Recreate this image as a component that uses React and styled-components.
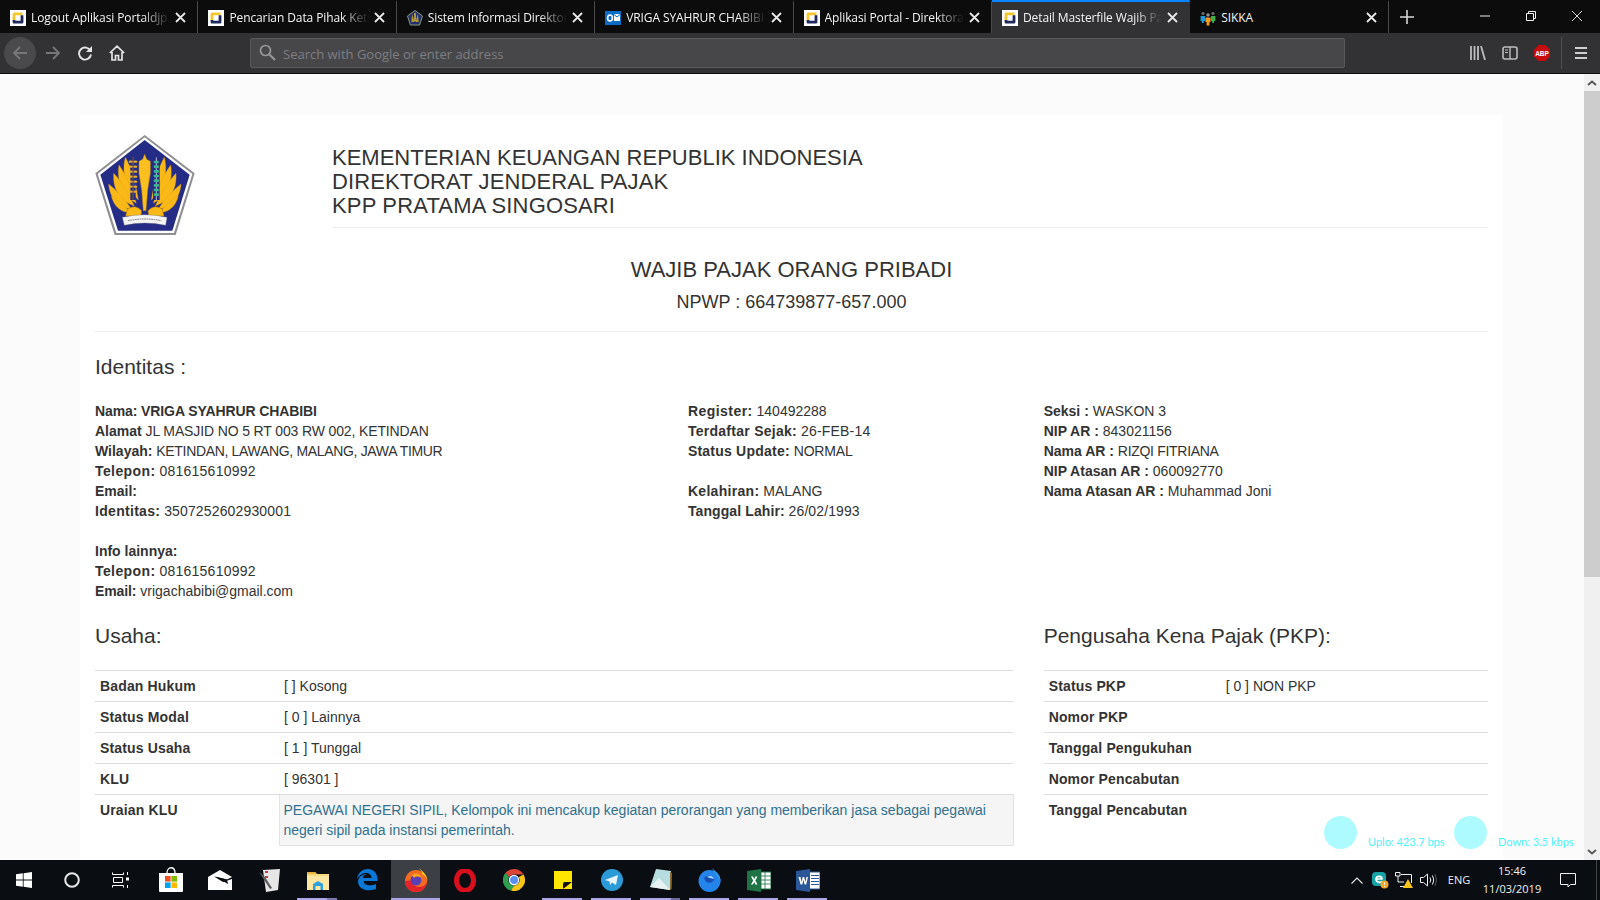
import React from "react";
import styled, { createGlobalStyle } from "styled-components";

const GlobalStyle = createGlobalStyle`
  html, body {
    margin: 0;
    padding: 0;
    height: 100%;
    overflow: hidden;
  }
  * { box-sizing: border-box; }
`;

const TABS = [
  { title: "Logout Aplikasi Portaldjp | Direktorat", icon: "portal" },
  { title: "Pencarian Data Pihak Ketiga", icon: "portal" },
  { title: "Sistem Informasi Direktorat", icon: "seal" },
  { title: "VRIGA SYAHRUR CHABIBI - Outlook", icon: "outlook" },
  { title: "Aplikasi Portal - Direktorat Jenderal", icon: "portal" },
  { title: "Detail Masterfile Wajib Pajak", icon: "portal", active: true },
  { title: "SIKKA", icon: "people", short: true },
];

function PortalIcon() {
  return (
    <svg width="16" height="16" viewBox="0 0 16 16">
      <rect width="16" height="16" fill="#fff" />
      <path d="M4 2.5 H12.5 V5.2 H5.4 V10 H2.6 V4 Q2.6 2.5 4 2.5 Z" fill="#f4c62b" />
      <path d="M2.6 10 H5.4 V10.8 H10.6 V5.2 H13.4 V12 Q13.4 13.6 12 13.6 H4 Q2.6 13.6 2.6 12 Z" fill="#1f2a5c" />
    </svg>
  );
}

function SealIcon() {
  return (
    <svg width="16" height="16" viewBox="0 0 16 16">
      <path d="M8 0.5 L15.5 6 L12.6 15 H3.4 L0.5 6 Z" fill="#24306e" stroke="#8d9a7a" />
      <path d="M5 4 L7.6 12 H4.4 Z M11 4 L8.4 12 H11.6 Z" fill="#b89a2a" />
      <rect x="7.2" y="3" width="1.6" height="8" fill="#c9b04a" />
    </svg>
  );
}

function OutlookIcon() {
  return (
    <svg width="16" height="16" viewBox="0 0 16 16">
      <rect x="0" y="1" width="16" height="14" fill="#0a6cc4" />
      <rect x="9" y="4" width="6" height="7" fill="#fff" />
      <path d="M9 4.5 L12 7 L15 4.5" fill="none" stroke="#0a6cc4" />
      <ellipse cx="5" cy="8" rx="2.4" ry="3" fill="none" stroke="#fff" strokeWidth="1.6" />
    </svg>
  );
}

function PeopleIcon() {
  return (
    <svg width="16" height="16" viewBox="0 0 16 16">
      <circle cx="3" cy="3.5" r="1.6" fill="#6b6b6b" />
      <circle cx="13" cy="3.5" r="1.6" fill="#6b6b6b" />
      <circle cx="8" cy="5" r="1.8" fill="#8d8d8d" />
      <path d="M0.6 6 H5 V11 H3.8 V13 H2 V11 H0.6 Z" fill="#1e9bd7" />
      <path d="M11 6 H15.4 V11 H14 V13 H12.2 V11 H11 Z" fill="#39b24a" />
      <path d="M5.4 7.4 H10.6 V12 H9.4 V15.6 H6.6 V12 H5.4 Z" fill="#f39a1f" />
    </svg>
  );
}

const TAB_ICONS = {
  portal: PortalIcon,
  seal: SealIcon,
  outlook: OutlookIcon,
  people: PeopleIcon,
};

const FEATHERS = [
  "M137 112 C156 145 168 190 176 240 C150 215 122 170 137 112 Z",
  "M118 135 C140 165 156 205 170 250 C138 232 108 190 118 135 Z",
  "M102 160 C126 185 146 220 164 258 C128 246 98 215 102 160 Z",
  "M87 192 C112 212 136 238 156 268 C120 262 90 238 87 192 Z",
  "M95 228 C116 240 136 256 152 278 C124 278 102 258 95 228 Z",
];

function Logo() {
  return (
    <svg width="100" height="100" viewBox="47 45 298 300">
      <path d="M195 45 L345 160 L288 345 H105 L47 160 Z" fill="#8f8f93" />
      <path d="M195 52 L338 162 L283 339 H110 L54 162 Z" fill="#fff" />
      <path d="M195 60 L330 164 L278 332 H115 L62 164 Z" fill="#252c86" />
      {FEATHERS.map((d) => (
        <path key={d} d={d} fill="#fbb917" stroke="#d9a015" strokeWidth="1" />
      ))}
      <g transform="matrix(-1 0 0 1 391 0)">
        {FEATHERS.map((d) => (
          <path key={d} d={d} fill="#fbb917" stroke="#d9a015" strokeWidth="1" />
        ))}
      </g>
      <path d="M143 268 Q165 250 186 272 L184 288 H138 Z" fill="#fbb917" stroke="#9a6c0a" strokeWidth="1.5" />
      <path d="M248 268 Q226 250 205 272 L207 288 H253 Z" fill="#fbb917" stroke="#9a6c0a" strokeWidth="1.5" />
      <path d="M160 112 V240" stroke="#252c86" strokeWidth="16" />
      <path d="M230 112 V240" stroke="#252c86" strokeWidth="20" />
      <path d="M195 103 L201 118 L212 124 V160 L204 210 L199 272 H191 L186 210 L178 160 V124 L189 118 Z" fill="#fbc01f" stroke="#b5830f" strokeWidth="1.5" />
      <path d="M160 112 V240" stroke="#9a6a1e" strokeWidth="2.5" />
      {[125, 140, 155, 170, 185, 200, 215].map((y) => (
        <g key={y} fill="#e9ac2e">
          <ellipse cx="153" cy={y} rx="6" ry="3.5" />
          <ellipse cx="167" cy={y} rx="6" ry="3.5" />
        </g>
      ))}
      <path d="M230 112 V240" stroke="#fff" strokeWidth="2" />
      {[122, 136, 150, 164, 178, 192, 206, 220].map((y) => (
        <rect key={y} x={222} y={y} width="16" height="8" rx="3" fill="#3bb58f" />
      ))}
      <path d="M128 292 Q195 276 262 292 L258 316 Q195 302 134 316 Z" fill="#f4f4f4" stroke="#6f6f6f" strokeWidth="1" />
      <path d="M145 302 Q195 292 245 302" stroke="#777" strokeWidth="3" strokeDasharray="5 2" fill="none" />
    </svg>
  );
}

function TaskIcon({ name }) {
  switch (name) {
    case "store":
      return (
        <svg width="24" height="26" viewBox="0 0 24 26">
          <path d="M8 6 C8 -1 16 -1 16 6" fill="none" stroke="#fff" strokeWidth="1.3" />
          <path d="M0 6 H24 V24 Q24 25 23 25 H1 Q0 25 0 24 Z" fill="#fff" />
          <rect x="6" y="9" width="5.6" height="5.6" fill="#f25022" />
          <rect x="12.4" y="9" width="5.6" height="5.6" fill="#7fba00" />
          <rect x="6" y="15.4" width="5.6" height="5.6" fill="#00a4ef" />
          <rect x="12.4" y="15.4" width="5.6" height="5.6" fill="#ffb900" />
        </svg>
      );
    case "mail":
      return (
        <svg width="24" height="20" viewBox="0 0 24 20">
          <path d="M0 7 L12 0 L24 7 L19 9.5 L6 6.5 L15 12 L24 9 V20 H0 Z" fill="#fff" />
          <path d="M7 6.5 L19 9.5 L20 14 Z" fill="#0a0d12" />
        </svg>
      );
    case "notes":
      return (
        <svg width="24" height="24" viewBox="0 0 24 24">
          <path d="M6 2 L23 1 L21 22 L9 24 Z" fill="#e6e6e6" />
          <path d="M2 4 L13 21 L15 20 L8 9 Z" fill="#5c5c5c" />
          <path d="M8 3 h3 v2 h-3 z M8 8 h3 v2 h-3z" fill="#c24040" />
        </svg>
      );
    case "folder":
      return (
        <svg width="22" height="19" viewBox="0 0 22 19">
          <path d="M0 1 H8 L10 3 H22 V19 H0 Z" fill="#f5d97e" />
          <path d="M0 1 H8 L10 3 H0 Z" fill="#e6b33f" />
          <path d="M0 5 H22 V19 H0 Z" fill="#fbe7a1" />
          <path d="M6 19 V13 L11 10 L16 13 V19 H13.5 V15 H8.5 V19 Z" fill="#2f9ee0" />
        </svg>
      );
    case "edge":
      return (
        <svg width="22" height="22" viewBox="0 0 22 22">
          <path d="M1 10 C2 3 7 0 12 0 C18 0 22 5 21.5 12 H7.5 C8 16 13 18 20 15 V20 C12 23 2 21 2 12 C3 7 7 5 11 5 C8 6 6.5 7.5 7 9 H15.5 C15.5 5 12 3.5 9 4 C5.5 4.5 3 7 1 10 Z" fill="#0a78d7" />
        </svg>
      );
    case "firefox":
      return (
        <svg width="24" height="24" viewBox="0 0 24 24">
          <circle cx="12" cy="13" r="11" fill="#f26b21" />
          <path d="M15 0 C18 3 24 7 23.4 14 C23 9 20 7 18 6 C19 4 16 2 15 0 Z" fill="#ffcb2e" />
          <path d="M1 13 C1 22 9 24 12 24 C18 24 23 19 23 14 C21 19 15 20 11 18 C8 16 8 13 10 12 Z" fill="#e5242a" />
          <circle cx="12" cy="12" r="5.5" fill="#5b3fb5" />
          <path d="M8 7 C12 4 17 6 18 11 C16 8 12 8 10 10 Z" fill="#ffa21c" />
        </svg>
      );
    case "opera":
      return (
        <svg width="22" height="23" viewBox="0 0 22 23">
          <ellipse cx="11" cy="11.5" rx="8.5" ry="10" fill="none" stroke="#d8101e" strokeWidth="5" />
        </svg>
      );
    case "chrome":
      return (
        <svg width="22" height="22" viewBox="0 0 22 22">
          <path d="M11 0 A11 11 0 0 1 20.5 5.5 H11 A5.5 5.5 0 0 0 6 8.3 L2.5 3.8 A11 11 0 0 1 11 0 Z" fill="#db4437" />
          <path d="M2.5 3.8 L6 8.3 A5.5 5.5 0 0 0 11 16.5 L8 21.6 A11 11 0 0 1 2.5 3.8 Z" fill="#2f9e4f" />
          <path d="M20.5 5.5 A11 11 0 0 1 8 21.6 L11 16.5 A5.5 5.5 0 0 0 15.7 8 Z" fill="#f5c518" />
          <circle cx="11" cy="11" r="4.6" fill="#5a8df0" stroke="#fff" strokeWidth="1.2" />
        </svg>
      );
    case "sticky":
      return (
        <svg width="18" height="18" viewBox="0 0 18 18">
          <rect width="18" height="18" fill="#ffe600" />
          <path d="M9 18 V13 Q9 11 11 11 H18 Z" fill="#111" />
        </svg>
      );
    case "telegram":
      return (
        <svg width="22" height="22" viewBox="0 0 22 22">
          <circle cx="11" cy="11" r="11" fill="#2a9bd8" />
          <path d="M4 11 L17 6 L15 16 L11 13.5 L9 16 L8.6 12.6 Z" fill="#e8f4fb" />
        </svg>
      );
    case "notepad":
      return (
        <svg width="24" height="24" viewBox="0 0 24 24">
          <path d="M7 1 L22 3 L21 22 L1 19 Z" fill="#b8dde0" />
          <path d="M1 19 L10 10 L21 22 Z" fill="#e8f2f2" />
          <path d="M21 4 L23 5 L22.6 21 L21 22 Z" fill="#8a6a32" />
        </svg>
      );
    case "fxdev":
      return (
        <svg width="23" height="24" viewBox="0 0 23 24">
          <circle cx="11.5" cy="13" r="11" fill="#2385ea" />
          <path d="M14 0 C17 3 23 7 22.6 14 C21 8 17 6 14 0 Z" fill="#2aa3ee" />
          <path d="M6 10 C9 7 14 7 16.5 11 C15 15 10 16 7.5 13 Z" fill="#1a4fb5" />
          <path d="M9 9 C12 7 15 8 16 11 C13 10 11 10 9 9 Z" fill="#a5dcf9" />
        </svg>
      );
    case "excel":
      return (
        <svg width="24" height="23" viewBox="0 0 24 23">
          <rect x="11" y="3" width="13" height="17" fill="#fff" stroke="#1f7244" />
          <path d="M14 3 V20 M18 3 V20 M11 7 H24 M11 11 H24 M11 15 H24" stroke="#1f7244" strokeWidth="0.8" />
          <path d="M0 2 L14 0 V23 L0 21 Z" fill="#1f7244" />
          <path d="M4 7.5 L6 7.5 L7.2 10 L8.5 7.5 H10.5 L8.3 11.5 L10.5 15.5 H8.4 L7.2 13 L5.9 15.5 H4 L6.2 11.5 Z" fill="#fff" />
        </svg>
      );
    case "word":
      return (
        <svg width="24" height="23" viewBox="0 0 24 23">
          <rect x="11" y="3" width="13" height="17" fill="#fff" stroke="#2b579a" />
          <path d="M15 6.5 H23 M15 9.5 H23 M15 12.5 H23 M15 15.5 H23" stroke="#2b579a" strokeWidth="1.2" />
          <path d="M0 2 L14 0 V23 L0 21 Z" fill="#2b579a" />
          <path d="M2.5 8 L4.5 8 L5.5 13 L6.7 8 H8.2 L9.4 13 L10.4 8 H12 L10.2 15.5 H8.6 L7.4 10.8 L6.3 15.5 H4.6 Z" fill="#fff" />
        </svg>
      );
    default:
      return null;
  }
}

const TASK_ITEMS = [
  { name: "store" },
  { name: "mail" },
  { name: "notes" },
  { name: "folder", open: true, stacked: "light" },
  { name: "edge" },
  { name: "firefox", active: true },
  { name: "opera" },
  { name: "chrome" },
  { name: "sticky", open: true },
  { name: "telegram", open: true },
  { name: "notepad", open: true, stacked: "dark" },
  { name: "fxdev", open: true },
  { name: "excel", open: true },
  { name: "word", open: true },
];

export default function App() {
  return (
    <Screen>
      <GlobalStyle />
      <TabBar>
        {TABS.map((tab) => {
          const Icon = TAB_ICONS[tab.icon];
          return (
            <Tab key={tab.title} $active={tab.active}>
              <TabIcon>
                <Icon />
              </TabIcon>
              <TabTitle $short={tab.short}>{tab.title}</TabTitle>
              <svg width="11" height="11" viewBox="0 0 11 11">
                <path d="M1 1 L10 10 M10 1 L1 10" stroke="#e8e8e8" strokeWidth="1.8" />
              </svg>
            </Tab>
          );
        })}
        <NewTab>
          <svg width="14" height="14" viewBox="0 0 14 14">
            <path d="M7 0 V14 M0 7 H14" stroke="#d8d8d8" strokeWidth="1.6" />
          </svg>
        </NewTab>
        <WindowButtons>
          <WindowButton>
            <svg width="10" height="10" viewBox="0 0 10 10">
              <path d="M0 5 H10" stroke="#eee" />
            </svg>
          </WindowButton>
          <WindowButton>
            <svg width="10" height="10" viewBox="0 0 10 10">
              <path d="M0.5 2.5 H7.5 V9.5 H0.5 Z M2.5 2.5 V0.5 H9.5 V7.5 H7.5" fill="none" stroke="#eee" />
            </svg>
          </WindowButton>
          <WindowButton>
            <svg width="10" height="10" viewBox="0 0 10 10">
              <path d="M0 0 L10 10 M10 0 L0 10" stroke="#eee" strokeWidth="0.9" />
            </svg>
          </WindowButton>
        </WindowButtons>
      </TabBar>

      <Toolbar>
        <BackButton>
          <svg width="16" height="16" viewBox="0 0 16 16">
            <path d="M15 8 H2 M8 2 L2 8 L8 14" fill="none" stroke="#77777a" strokeWidth="1.8" />
          </svg>
        </BackButton>
        <NavButton>
          <svg width="16" height="16" viewBox="0 0 16 16">
            <path d="M1 8 H14 M8 2 L14 8 L8 14" fill="none" stroke="#77777a" strokeWidth="1.8" />
          </svg>
        </NavButton>
        <NavButton>
          <svg width="16" height="16" viewBox="0 0 16 16">
            <path d="M13.5 6 A6 6 0 1 0 14 9.5" fill="none" stroke="#e4e4e4" strokeWidth="1.9" />
            <path d="M15 1 V7 H9 Z" fill="#e4e4e4" />
          </svg>
        </NavButton>
        <NavButton>
          <svg width="16" height="16" viewBox="0 0 16 16">
            <path d="M0.8 8 L8 1.2 L15.2 8 M3 7 V15 H6.5 V10.5 H9.5 V15 H13 V7" fill="none" stroke="#e4e4e4" strokeWidth="1.7" />
          </svg>
        </NavButton>
        <UrlBar>
          <svg width="17" height="17" viewBox="0 0 17 17">
            <circle cx="6.5" cy="6.5" r="5" fill="none" stroke="#98989a" strokeWidth="1.7" />
            <path d="M10.2 10.2 L16 16" stroke="#98989a" strokeWidth="2" />
          </svg>
          <UrlHint>Search with Google or enter address</UrlHint>
        </UrlBar>
        <ToolIcons>
          <svg width="16" height="14" viewBox="0 0 16 14">
            <path d="M1 0 V14 M4.5 0 V14 M8 0 V14 M11 0 L15 14" stroke="#bdbdbf" strokeWidth="1.8" />
          </svg>
          <svg width="16" height="14" viewBox="0 0 16 14">
            <rect x="1" y="1" width="14" height="12" rx="2" fill="none" stroke="#bdbdbf" strokeWidth="1.6" />
            <path d="M8 1 V13" stroke="#bdbdbf" strokeWidth="1.4" />
            <path d="M3 4 H6 M3 6.5 H6" stroke="#bdbdbf" />
          </svg>
          <svg width="16" height="16" viewBox="0 0 16 16">
            <path d="M4.7 0 H11.3 L16 4.7 V11.3 L11.3 16 H4.7 L0 11.3 V4.7 Z" fill="#c70d0c" />
            <AbpLabel x="8" y="10.6">ABP</AbpLabel>
          </svg>
        </ToolIcons>
        <ToolDivider />
        <svg width="12" height="12" viewBox="0 0 12 12">
          <path d="M0 1 H12 M0 6 H12 M0 11 H12" stroke="#cfcfcf" strokeWidth="1.8" />
        </svg>
      </Toolbar>

      <Viewport>
        <Page>
          <Card>
            <HeaderRow>
              <LogoCol>
                <Logo />
              </LogoCol>
              <HeaderText>
                <OrgLine>KEMENTERIAN KEUANGAN REPUBLIK INDONESIA</OrgLine>
                <OrgLine $ls={0.1}>DIREKTORAT JENDERAL PAJAK</OrgLine>
                <OrgLine $ls={0.15}>KPP PRATAMA SINGOSARI</OrgLine>
                <Rule />
              </HeaderText>
            </HeaderRow>

            <DocTitle>WAJIB PAJAK ORANG PRIBADI</DocTitle>
            <DocNumber>NPWP : 664739877-657.000</DocNumber>
            <TitleRule />

            <SectionTitle>Identitas :</SectionTitle>
            <InfoGrid>
              <InfoCol $span={5}>
                <div><Key $ls={-0.1}>Nama: VRIGA SYAHRUR CHABIBI</Key></div>
                <div><Key>Alamat</Key> <Val $ls={-0.13}>JL MASJID NO 5 RT 003 RW 002, KETINDAN</Val></div>
                <div><Key>Wilayah:</Key> <Val $ls={-0.33}>KETINDAN, LAWANG, MALANG, JAWA TIMUR</Val></div>
                <div><Key $ls={0.4}>Telepon:</Key> <Val $ls={0.25}>081615610992</Val></div>
                <div><Key>Email:</Key></div>
                <div><Key $ls={0.3}>Identitas:</Key> <Val $ls={0.15}>3507252602930001</Val></div>
                <Gap />
                <div><Key>Info lainnya:</Key></div>
                <div><Key $ls={0.4}>Telepon:</Key> <Val $ls={0.25}>081615610992</Val></div>
                <div><Key $ls={-0.1}>Email:</Key> vrigachabibi@gmail.com</div>
              </InfoCol>
              <InfoCol $span={3}>
                <div><Key $ls={0.45}>Register:</Key> 140492288</div>
                <div><Key $ls={0.27}>Terdaftar Sejak:</Key> <Val $ls={0.2}>26-FEB-14</Val></div>
                <div><Key $ls={0.22}>Status Update:</Key> <Val $ls={-0.15}>NORMAL</Val></div>
                <Gap />
                <div><Key $ls={0.3}>Kelahiran:</Key> MALANG</div>
                <div><Key $ls={0.1}>Tanggal Lahir:</Key> <Val $ls={0.1}>26/02/1993</Val></div>
              </InfoCol>
              <InfoCol $span={4}>
                <div><Key>Seksi :</Key> WASKON 3</div>
                <div><Key>NIP AR :</Key> 843021156</div>
                <div><Key>Nama AR :</Key> <Val $ls={-0.3}>RIZQI FITRIANA</Val></div>
                <div><Key>NIP Atasan AR :</Key> 060092770</div>
                <div><Key>Nama Atasan AR :</Key> Muhammad Joni</div>
              </InfoCol>
            </InfoGrid>

            <InfoGrid>
              <InfoCol $span={8}>
                <TableTitle>Usaha:</TableTitle>
                <DataTable>
                  <tbody>
                    <tr>
                      <LabelCell $width={184}>Badan Hukum</LabelCell>
                      <ValueCell>[ ] Kosong</ValueCell>
                    </tr>
                    <tr>
                      <LabelCell>Status Modal</LabelCell>
                      <ValueCell>[ 0 ] Lainnya</ValueCell>
                    </tr>
                    <tr>
                      <LabelCell>Status Usaha</LabelCell>
                      <ValueCell>[ 1 ] Tunggal</ValueCell>
                    </tr>
                    <tr>
                      <LabelCell>KLU</LabelCell>
                      <ValueCell>[ 96301 ]</ValueCell>
                    </tr>
                    <tr>
                      <LabelCell>Uraian KLU</LabelCell>
                      <WellCell>
                        PEGAWAI NEGERI SIPIL, Kelompok ini mencakup kegiatan perorangan yang memberikan jasa sebagai pegawai negeri sipil pada instansi pemerintah.
                      </WellCell>
                    </tr>
                  </tbody>
                </DataTable>
              </InfoCol>
              <InfoCol $span={4}>
                <TableTitle>Pengusaha Kena Pajak (PKP):</TableTitle>
                <DataTable>
                  <tbody>
                    <tr>
                      <LabelCell $width={177}>Status PKP</LabelCell>
                      <ValueCell>[ 0 ] NON PKP</ValueCell>
                    </tr>
                    <tr>
                      <LabelCell>Nomor PKP</LabelCell>
                      <ValueCell />
                    </tr>
                    <tr>
                      <LabelCell>Tanggal Pengukuhan</LabelCell>
                      <ValueCell />
                    </tr>
                    <tr>
                      <LabelCell>Nomor Pencabutan</LabelCell>
                      <ValueCell />
                    </tr>
                    <tr>
                      <LabelCell>Tanggal Pencabutan</LabelCell>
                      <ValueCell />
                    </tr>
                  </tbody>
                </DataTable>
              </InfoCol>
            </InfoGrid>
          </Card>
          <SpeedWidget>
            <SpeedDot />
            <SpeedText>Uplo: 423.7 bps</SpeedText>
            <SpeedDot />
            <SpeedText>Down: 3.5 kbps</SpeedText>
          </SpeedWidget>
        </Page>
        <ScrollBar>
          <ScrollArrow>
            <svg width="10" height="6" viewBox="0 0 10 6">
              <path d="M1 5 L5 1.5 L9 5" fill="none" stroke="#555" strokeWidth="1.8" />
            </svg>
          </ScrollArrow>
          <ScrollThumb />
          <ScrollTrack />
          <ScrollArrow>
            <svg width="10" height="6" viewBox="0 0 10 6">
              <path d="M1 1 L5 4.5 L9 1" fill="none" stroke="#555" strokeWidth="1.8" />
            </svg>
          </ScrollArrow>
        </ScrollBar>
      </Viewport>

      <Taskbar>
        <SystemSlot>
          <svg width="16" height="16" viewBox="0 0 16 16">
            <path d="M0 2.3 L6.8 1.3 V7.5 H0 Z M7.6 1.2 L16 0 V7.5 H7.6 Z M0 8.4 H6.8 V14.7 L0 13.7 Z M7.6 8.4 H16 V16 L7.6 14.8 Z" fill="#fff" />
          </svg>
        </SystemSlot>
        <SystemSlot>
          <svg width="16" height="16" viewBox="0 0 16 16">
            <circle cx="8" cy="8" r="6.8" fill="none" stroke="#e8e8e8" strokeWidth="2" />
          </svg>
        </SystemSlot>
        <SystemSlot>
          <svg width="17" height="16" viewBox="0 0 17 16">
            <path d="M0.5 0.5 V2.5 H11.5 V0.5 M1.5 5.5 H10.5 V10.5 H1.5 Z M0.5 15.5 V13.5 H11.5 V15.5 M15.5 0 V3 M15.5 13 V16" fill="none" stroke="#fff" />
            <rect x="14" y="5.5" width="3" height="3" fill="#fff" />
          </svg>
        </SystemSlot>
        <TaskItems>
          {TASK_ITEMS.map((item) => (
            <TaskSlot key={item.name} $active={item.active} $open={item.open} $stacked={item.stacked}>
              <TaskIcon name={item.name} />
            </TaskSlot>
          ))}
        </TaskItems>
        <Tray>
          <svg width="12" height="7" viewBox="0 0 12 7">
            <path d="M0.5 6.5 L6 1 L11.5 6.5" fill="none" stroke="#e8e8e8" strokeWidth="1.1" />
          </svg>
          <TraySlot>
            <svg width="17" height="17" viewBox="0 0 17 17">
              <rect x="0" y="0" width="14" height="14" rx="4" fill="#16a3a8" />
              <path d="M4 7 H10 C10 3.5 4 3.5 4 7 C4 10.5 8 11 10 9.5" fill="none" stroke="#fff" strokeWidth="1.7" />
              <circle cx="12.5" cy="12.5" r="4" fill="#f5a623" />
              <path d="M12.5 10.5 V13 M12.5 14 V15" stroke="#fff" />
            </svg>
          </TraySlot>
          <TraySlot>
            <svg width="18" height="16" viewBox="0 0 18 16">
              <path d="M0.5 0.5 H5 V4 H0.5 Z M3 4 V10 H9 M6 2.5 H16.5 V11" fill="none" stroke="#eee" />
              <path d="M5 14.5 H10" stroke="#eee" />
              <path d="M13 7 L18 16 H8 Z" fill="#f8c51c" />
            </svg>
          </TraySlot>
          <TraySlot>
            <svg width="17" height="14" viewBox="0 0 17 14">
              <path d="M0.5 4.5 H3.5 L7.5 1 V13 L3.5 9.5 H0.5 Z" fill="none" stroke="#eee" />
              <path d="M10 4.5 Q11.5 7 10 9.5 M12.5 2.5 Q15 7 12.5 11.5" fill="none" stroke="#eee" />
              <path d="M15 1 Q18 7 15 13" fill="none" stroke="#555" />
            </svg>
          </TraySlot>
          <TrayLang>ENG</TrayLang>
          <Clock>
            <span>15:46</span>
            <span>11/03/2019</span>
          </Clock>
          <Notify>
            <svg width="16" height="15" viewBox="0 0 16 15">
              <path d="M0.5 0.5 H15.5 V11.5 H10.5 L8 14 V11.5 H0.5 Z" fill="none" stroke="#f0f0f0" />
            </svg>
          </Notify>
          <DesktopEdge />
        </Tray>
      </Taskbar>
    </Screen>
  );
}

const Screen = styled.div`
  width: 1600px;
  height: 900px;
  display: flex;
  flex-direction: column;
  overflow: hidden;
  background: #fbfbfb;
  color: #333;
  font-family: "Liberation Sans", Arial, sans-serif;
  font-size: 14px;
  line-height: 20px;
`;

const TabBar = styled.div`
  height: 33px;
  flex: none;
  display: flex;
  background: #0c0c0d;
`;

const Tab = styled.div`
  width: 198.4px;
  height: 33px;
  display: flex;
  align-items: center;
  padding: 0 11px 0 10px;
  background: ${(p) => (p.$active ? "#323234" : "transparent")};
  border-top: 2px solid ${(p) => (p.$active ? "#0a84ff" : "transparent")};
  border-right: 1px solid ${(p) => (p.$active ? "transparent" : "#4a4a4c")};
  font-family: "Open Sans", sans-serif;
  font-size: 12px;
  letter-spacing: -0.1px;
  color: #f4f4f4;
`;

const TabIcon = styled.span`
  width: 16px;
  height: 16px;
  flex: none;
  display: flex;
`;

const TabTitle = styled.span`
  flex: 1;
  min-width: 0;
  margin: 0 5px 0 5px;
  white-space: nowrap;
  overflow: hidden;
  -webkit-mask-image: ${(p) => (p.$short ? "none" : "linear-gradient(to right, #000 80%, transparent 100%)")};
  mask-image: ${(p) => (p.$short ? "none" : "linear-gradient(to right, #000 80%, transparent 100%)")};
`;

const NewTab = styled.div`
  width: 36px;
  display: flex;
  align-items: center;
  justify-content: center;
`;

const WindowButtons = styled.div`
  margin-left: auto;
  display: flex;
`;

const WindowButton = styled.div`
  width: 46px;
  height: 31px;
  display: flex;
  align-items: center;
  justify-content: center;
`;

const Toolbar = styled.div`
  height: 41px;
  flex: none;
  display: flex;
  align-items: center;
  padding: 0 13px 1px 4px;
  background: #323234;
  border-bottom: 1px solid #0c0c0d;
`;

const NavButton = styled.div`
  width: 32px;
  height: 32px;
  flex: none;
  display: flex;
  align-items: center;
  justify-content: center;
`;

const BackButton = styled(NavButton)`
  margin-right: 1px;
  border-radius: 50%;
  background: #4a4a4c;
`;

const UrlBar = styled.div`
  width: 1095px;
  height: 30px;
  flex: none;
  margin-left: 117px;
  display: flex;
  align-items: center;
  gap: 7px;
  padding-left: 8px;
  background: #474749;
  border: 1px solid #59595b;
  border-radius: 2px;
`;

const UrlHint = styled.span`
  padding-top: 2px;
  font-family: "Open Sans", sans-serif;
  font-size: 13px;
  color: #7e7e82;
`;

const ToolIcons = styled.div`
  display: flex;
  align-items: center;
  gap: 16px;
  margin-left: 125px;
`;

const AbpLabel = styled.text`
  font-family: "Liberation Sans", sans-serif;
  font-size: 6.5px;
  font-weight: 700;
  fill: #fff;
  text-anchor: middle;
`;

const ToolDivider = styled.div`
  width: 1px;
  height: 32px;
  margin: 0 13px 0 11px;
  background: #4f4f51;
`;

const Viewport = styled.div`
  flex: 1;
  min-height: 0;
  display: flex;
`;

const Page = styled.div`
  position: relative;
  flex: 1;
  min-width: 0;
  padding: 41px 81px 0 80px;
  overflow: hidden;
`;

const Card = styled.div`
  background: #fff;
  padding: 20px 15px 40px;
`;

const HeaderRow = styled.div`
  display: grid;
  grid-template-columns: 207px 1fr;
  column-gap: 30px;
`;

const LogoCol = styled.div`
  height: 100px;
`;

const HeaderText = styled.div`
  padding-top: 11px;
`;

const OrgLine = styled.div`
  font-size: 22px;
  line-height: 24px;
  letter-spacing: ${(p) => p.$ls || 0}px;
`;

const Rule = styled.hr`
  height: 1px;
  margin: 9px 0 0;
  border: 0;
  background: #eee;
`;

const DocTitle = styled.div`
  margin-top: 22px;
  font-size: 22px;
  line-height: 26px;
  text-align: center;
`;

const DocNumber = styled.div`
  margin-top: 9px;
  font-size: 18px;
  line-height: 20px;
  text-align: center;
`;

const TitleRule = styled(Rule)`
  margin-top: 19px;
`;

const SectionTitle = styled.div`
  margin-top: 23px;
  margin-bottom: 23px;
  font-size: 21px;
  line-height: 23px;
`;

const InfoGrid = styled.div`
  display: grid;
  grid-template-columns: repeat(12, 1fr);
  column-gap: 30px;
`;

const InfoCol = styled.div`
  grid-column: span ${(p) => p.$span};
  min-width: 0;
`;

const Key = styled.b`
  font-weight: 700;
  letter-spacing: ${(p) => p.$ls || 0}px;
`;

const Val = styled.span`
  letter-spacing: ${(p) => p.$ls || 0}px;
`;

const Gap = styled.div`
  height: 20px;
`;

const TableTitle = styled.div`
  margin-top: 23px;
  margin-bottom: 23px;
  font-size: 21px;
  line-height: 23px;
`;

const DataTable = styled.table`
  width: 100%;
  border-collapse: collapse;
  border-spacing: 0;
  border-top: 1px solid #ddd;
`;

const LabelCell = styled.td`
  width: ${(p) => (p.$width ? `${p.$width}px` : "auto")};
  height: 31px;
  padding: 5px;
  font-weight: 700;
  letter-spacing: 0.15px;
  vertical-align: top;
  border-bottom: 1px solid #ddd;
  tr:last-child & {
    border-bottom: 0;
  }
`;

const ValueCell = styled.td`
  height: 31px;
  padding: 5px;
  vertical-align: top;
  border-bottom: 1px solid #ddd;
  tr:last-child & {
    border-bottom: 0;
  }
`;

const WellCell = styled.td`
  padding: 5px 5px 5px 4px;
  color: #31708f;
  background: #f5f5f5;
  border: 1px solid #e3e3e3;
  border-top: 0;
`;

const SpeedWidget = styled.div`
  position: absolute;
  right: 0;
  bottom: 11px;
  display: flex;
  align-items: flex-end;
`;

const SpeedDot = styled.div`
  width: 33px;
  height: 33px;
  border-radius: 50%;
  background: #aefbff;
`;

const SpeedText = styled.div`
  width: 97px;
  padding-left: 11px;
  font-family: Lato, sans-serif;
  font-size: 11px;
  font-weight: 400;
  line-height: 14px;
  color: #4ff3fb;
  white-space: nowrap;
`;

const ScrollBar = styled.div`
  width: 16px;
  flex: none;
  display: flex;
  flex-direction: column;
  background: #f0f0f0;
`;

const ScrollArrow = styled.div`
  height: 17px;
  flex: none;
  display: flex;
  align-items: center;
  justify-content: center;
`;

const ScrollThumb = styled.div`
  height: 486px;
  flex: none;
  background: #cdcdcd;
`;

const ScrollTrack = styled.div`
  flex: 1;
`;

const Taskbar = styled.div`
  height: 40px;
  flex: none;
  display: flex;
  background: #0a0d12;
`;

const SystemSlot = styled.div`
  width: 48px;
  display: flex;
  align-items: center;
  justify-content: center;
`;

const TaskItems = styled.div`
  display: flex;
  margin-left: 2px;
`;

const TaskSlot = styled.div`
  position: relative;
  width: 49px;
  height: 40px;
  display: flex;
  align-items: center;
  justify-content: center;
  background: ${(p) => (p.$active ? "#3c3f44" : "transparent")};

  &::after {
    content: "";
    display: ${(p) => (p.$active || p.$open ? "block" : "none")};
    position: absolute;
    left: ${(p) => (p.$active ? "0" : "4px")};
    right: ${(p) => (p.$active ? "0" : "5px")};
    bottom: 0;
    height: 2px;
    background: ${(p) =>
      p.$stacked === "light"
        ? "linear-gradient(to right, #aca5e8 75%, #7d78ad 75%)"
        : p.$stacked === "dark"
          ? "linear-gradient(to right, #aca5e8 78%, #6f6b9c 78%)"
          : "#aca5e8"};
  }
`;

const Tray = styled.div`
  margin-left: auto;
  display: flex;
  align-items: center;
  color: #f0f0f0;
`;

const TraySlot = styled.div`
  width: 24px;
  display: flex;
  justify-content: center;

  &:first-of-type {
    margin-left: 5px;
  }
`;

const TrayLang = styled.div`
  width: 38px;
  font-family: "Open Sans", sans-serif;
  font-size: 11px;
  text-align: center;
`;

const Clock = styled.div`
  width: 68px;
  display: flex;
  flex-direction: column;
  align-items: center;
  font-family: "Open Sans", sans-serif;
  font-size: 11px;
  line-height: 18px;
`;

const Notify = styled.div`
  width: 36px;
  margin-left: 4px;
  display: flex;
  justify-content: center;
`;

const DesktopEdge = styled.div`
  width: 1px;
  height: 40px;
  margin-left: 10px;
  margin-right: 3px;
  background: #444;
`;
